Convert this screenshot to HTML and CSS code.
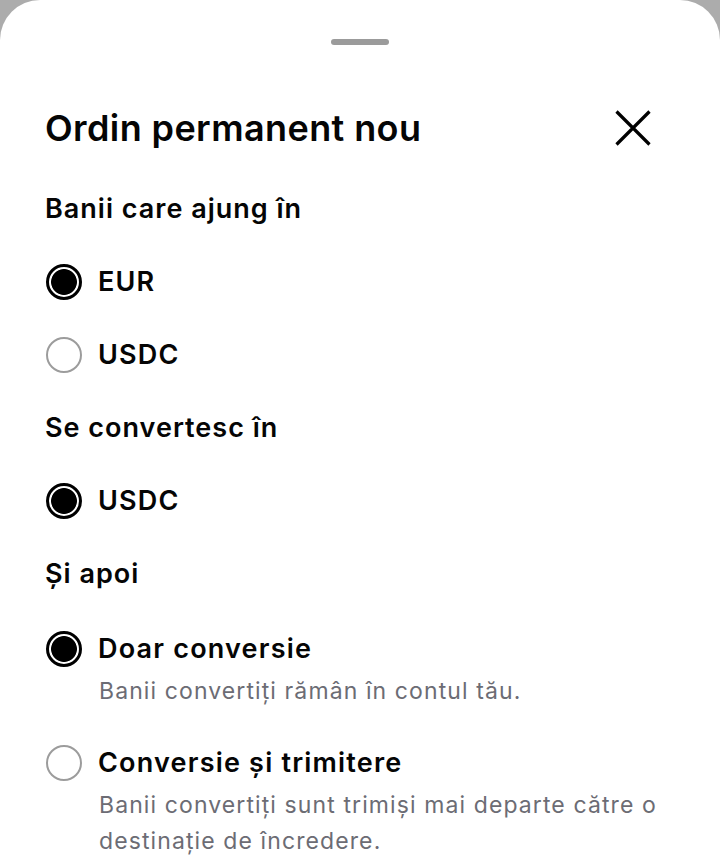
FILE: index.html
```html
<!DOCTYPE html>
<html lang="ro">
<head>
<meta charset="utf-8">
<title>Ordin permanent nou</title>
<link rel="stylesheet" href="styles.css">
</head>
<body>
<div class="sheet">
  <div class="handle"></div>
  <div class="header">
    <h1 class="title">Ordin permanent nou</h1>
    <button class="close" aria-label="Închide">
      <svg width="36" height="36" viewBox="0 0 36 36"><path d="M1.5 1.5 L34.5 34.5 M34.5 1.5 L1.5 34.5" stroke="#000" stroke-width="3.2" fill="none"/></svg>
    </button>
  </div>
  <div class="list">
    <div class="section">Banii care ajung în</div>
    <div class="option"><span class="radio checked"></span><span class="label">EUR</span></div>
    <div class="option"><span class="radio"></span><span class="label">USDC</span></div>
    <div class="section">Se convertesc în</div>
    <div class="option"><span class="radio checked"></span><span class="label">USDC</span></div>
    <div class="section">Și apoi</div>
    <div class="option-block">
      <div class="option"><span class="radio checked"></span><span class="label">Doar conversie</span></div>
      <p class="desc">Banii convertiți rămân în contul tău.</p>
    </div>
    <div class="option-block">
      <div class="option"><span class="radio"></span><span class="label">Conversie și trimitere</span></div>
      <p class="desc">Banii convertiți sunt trimiși mai departe către o destinație de încredere.</p>
    </div>
  </div>
</div>
</body>
</html>
```
FILE: styles.css
```css
html, body {
  margin: 0;
  padding: 0;
  background: #acacac;
  height: 100%;
}
body {
  font-family: Inter, "Noto Sans", sans-serif;
  color: #050505;
  overflow: hidden;
}
.sheet {
  background: #fff;
  border-radius: 40px 40px 0 0;
  height: 867px;
  box-sizing: border-box;
  padding-top: 39px;
}
.handle {
  width: 58px;
  height: 6px;
  border-radius: 3px;
  background: #9b9b9b;
  margin: 0 auto;
}
.header {
  display: flex;
  align-items: center;
  justify-content: space-between;
  padding: 0 69px 0 45px;
  margin-top: 59px;
  height: 48px;
}
.title {
  margin: 0;
  font-size: 36px;
  font-weight: 600;
  line-height: 48px;
  letter-spacing: 0.4px;
}
.close {
  border: 0;
  background: none;
  padding: 0;
  width: 36px;
  height: 36px;
  display: flex;
}
.list {
  display: flex;
  flex-direction: column;
  gap: 33px;
  padding: 0 45px;
  margin-top: 37px;
}
.section {
  font-size: 27px;
  font-weight: 600;
  line-height: 40px;
  height: 40px;
  letter-spacing: 1px;
}
.option {
  display: flex;
  align-items: center;
  gap: 16px;
  height: 40px;
}
.option-block {
  padding-top: 2px;
}
.option-block:last-child {
  padding-top: 1px;
}
.label {
  font-size: 27px;
  font-weight: 600;
  line-height: 40px;
  letter-spacing: 1.2px;
}
.radio {
  width: 36px;
  height: 36px;
  box-sizing: border-box;
  border-radius: 50%;
  border: 2px solid #9c9c9c;
  flex: none;
  margin-left: 1px;
}
.radio.checked {
  border: 3px solid #000;
  background: radial-gradient(circle, #000 0 12.5px, #fff 13.3px);
}
.desc {
  margin: 4px 0 0 54px;
  font-size: 23px;
  line-height: 36px;
  color: #6c6c74;
  letter-spacing: 1.1px;
}
```
